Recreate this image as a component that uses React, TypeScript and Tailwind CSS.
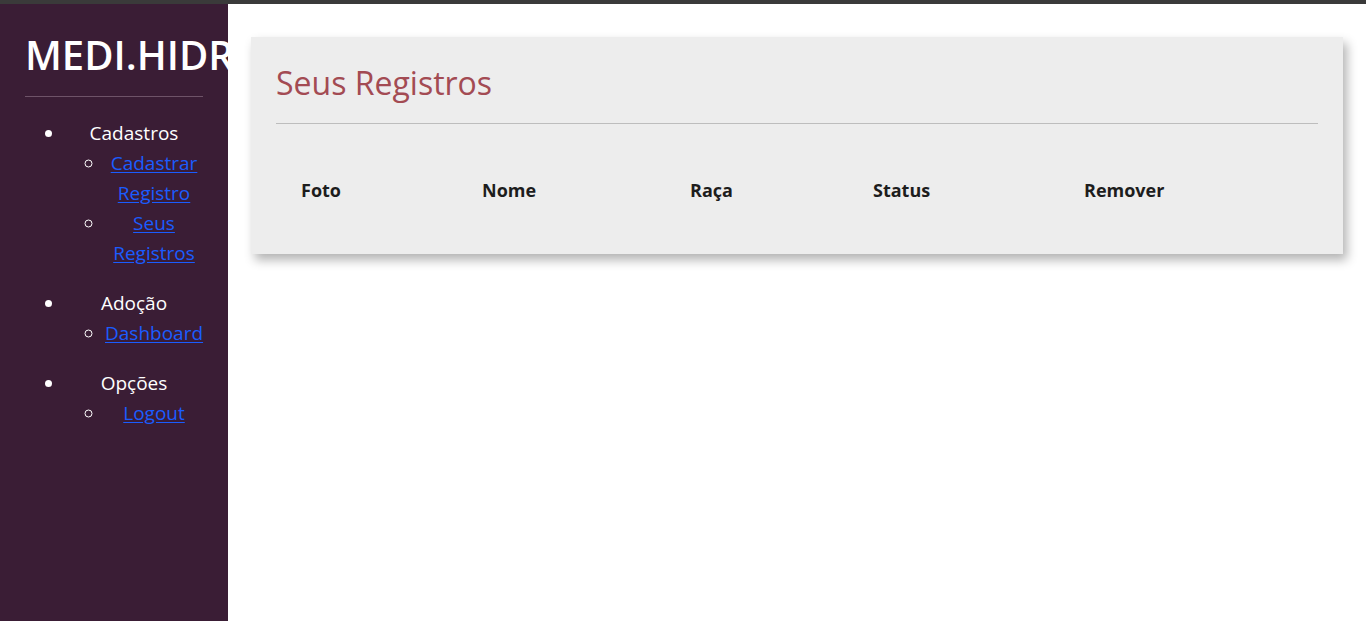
import React from 'react';

const cadastros = ['Cadastrar Registro', 'Seus Registros'];
const columns = [
    { label: 'Foto', w: 'w-[181px]' },
    { label: 'Nome', w: 'w-[208px]' },
    { label: 'Raça', w: 'w-[183px]' },
    { label: 'Status', w: 'w-[211px]' },
    { label: 'Remover', w: 'w-[150px]' },
];

function SubLink({ children }: { children: React.ReactNode }) {
    return (
        <li className="list-[circle] marker:text-white">
            <a href="#" className="text-[#1a5cff] underline underline-offset-2">{children}</a>
        </li>
    );
}

export default function App() {
    return (
        <div className="h-[621px] flex flex-col bg-white font-['Open_Sans','Noto_Sans',sans-serif]">
            <div className="h-1 bg-[#3a3a3a] shrink-0" />
            <div className="flex flex-1 min-h-0">
                {/* Sidebar */}
                <aside className="w-[228px] shrink-0 bg-[#3a1d35] px-[25px] pt-[27px] overflow-hidden">
                    <h1 className="text-[40px] leading-[48px] font-semibold text-white whitespace-nowrap">MEDI.HIDRATE</h1>
                    <hr className="mt-[17px] border-t border-[#6e5368]" />
                    <ul className="mt-[21px] pl-10 list-disc text-white text-[19px] leading-[30px] text-center marker:text-white">
                        <li className="mb-5">
                            Cadastros
                            <ul className="pl-10">
                                {cadastros.map((c) => (
                                    <SubLink key={c}>{c}</SubLink>
                                ))}
                            </ul>
                        </li>
                        <li className="mb-5">
                            Adoção
                            <ul className="pl-10">
                                <SubLink>Dashboard</SubLink>
                            </ul>
                        </li>
                        <li>
                            Opções
                            <ul className="pl-10">
                                <SubLink>Logout</SubLink>
                            </ul>
                        </li>
                    </ul>
                </aside>

                {/* Main */}
                <main className="flex-1 pl-[23px] pr-[23px] pt-[33px]">
                    <section className="bg-[#ededed] px-[25px] pt-[24px] pb-[28px] shadow-[4px_6px_10px_rgba(0,0,0,0.3)]">
                        <h2 className="text-[32px] leading-[44px] text-[#a34b53]">Seus Registros</h2>
                        <hr className="mt-[18px] border-t border-[#bdbdbd]" />
                        <div className="flex pl-[25px] pt-[53px] pb-[22px] text-[18px] font-bold text-[#1d1d1d]">
                            {columns.map((c) => (
                                <div key={c.label} className={c.w}>{c.label}</div>
                            ))}
                        </div>
                    </section>
                </main>
            </div>
        </div>
    );
}
